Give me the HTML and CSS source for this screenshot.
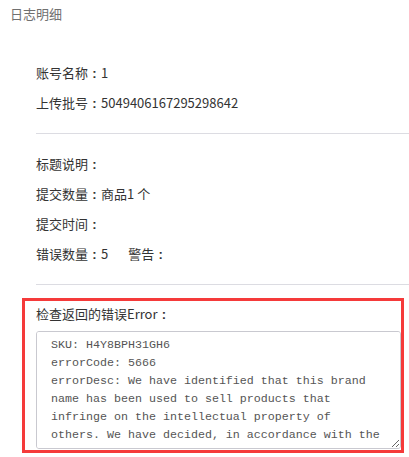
FILE: index.html
```html
<!DOCTYPE html>
<html lang="zh-CN">
<head>
<meta charset="UTF-8">
<meta name="viewport" content="width=device-width, initial-scale=1.0">
<title>日志明细</title>
<link rel="stylesheet" href="styles.css">
</head>
<body>
<div class="title">日志明细</div>
<div class="detail">
  <div class="section">
    <div class="row">账号名称<span class="colon">:</span>1</div>
    <div class="row">上传批号<span class="colon">:</span>5049406167295298642</div>
  </div>
  <div class="section">
    <div class="row">标题说明<span class="colon">:</span></div>
    <div class="row">提交数量<span class="colon">:</span>商品1 个</div>
    <div class="row">提交时间<span class="colon">:</span></div>
    <div class="row">错误数量<span class="colon">:</span>5<span class="warn">警告<span class="colon">:</span></span></div>
  </div>
</div>
<div class="errbox">
  <div class="errlabel">检查返回的错误Error<span class="colon">:</span></div>
  <textarea class="errtext" wrap="off" readonly>SKU: H4Y8BPH31GH6
errorCode: 5666
errorDesc: We have identified that this brand
name has been used to sell products that
infringe on the intellectual property of
others. We have decided, in accordance with the
Amazon Services Business Solutions Agreement,
to remove your ability to list products under
this brand name. If you believe this is in
error, please contact Seller Support and
provide documentation demonstrating that you
are authorized to sell this brand.

SKU: H4Y8BPH31GH6
errorCode: 8572
errorDesc: The product identifier you provided
matches an existing catalog item.</textarea>
</div>
</body>
</html>
```

FILE: styles.css
```css
*{margin:0;padding:0;box-sizing:border-box}
body{background:#fff;font-family:"Noto Sans CJK SC","Liberation Sans",sans-serif;font-size:13px;color:#333;width:409px;height:457px;overflow:hidden}
.title{height:28px;line-height:28px;padding-left:10px;color:#707070}
.detail{margin:30px 0 0 36px}
.section{padding:15px 0;border-bottom:1px solid #dcdce2}
.section:first-child{padding-top:0}
.row{height:30px;line-height:30px;white-space:nowrap}
.colon{display:inline-block;width:13px;text-align:center;font-family:"Liberation Sans",sans-serif;font-weight:bold}
.warn{margin-left:20px}
.errbox{margin:13px 5px 0 22px;border:3px solid #f53a3a;padding:3px 0 1px 11px}
.errlabel{line-height:20px;margin-bottom:6px}
.errtext{display:block;width:365px;height:118px;border:1px solid #c9c9d0;border-radius:3px;padding:4px 10px 4px 14px;font-family:"Liberation Mono",monospace;font-size:11.67px;line-height:18px;color:#555;background:#fff;outline:none;resize:both;overflow-y:scroll;overflow-x:hidden;white-space:pre}
.errtext::-webkit-scrollbar{width:5px}
.errtext::-webkit-scrollbar-track{background:#f0f0f0}
.errtext::-webkit-scrollbar-thumb{background:#c8c8c8}
```
